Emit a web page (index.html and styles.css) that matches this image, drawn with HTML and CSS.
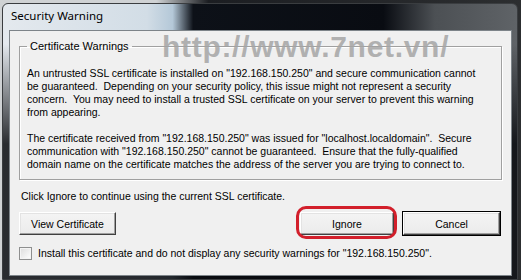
FILE: index.html
```html
<!DOCTYPE html>
<html>
<head>
  <meta charset="utf-8">
  <title>Security Warning</title>
  <link rel="stylesheet" href="styles.css">
</head>
<body>
  <div class="window">
    <div class="titlebar">Security Warning</div>

    <div class="client">
      <fieldset class="group">
        <legend>Certificate Warnings</legend>
        <p>An untrusted SSL certificate is installed on "192.168.150.250" and secure communication cannot<br>
        be guaranteed.&nbsp; Depending on your security policy, this issue might not represent a security<br>
        concern.&nbsp; You may need to install a trusted SSL certificate on your server to prevent this warning<br>
        from appearing.</p>
        <p>The certificate received from "192.168.150.250" was issued for "localhost.localdomain".&nbsp; Secure<br>
        communication with "192.168.150.250" cannot be guaranteed.&nbsp; Ensure that the fully-qualified<br>
        domain name on the certificate matches the address of the server you are trying to connect to.</p>
      </fieldset>

      <div class="hint">Click Ignore to continue using the current SSL certificate.</div>

      <div class="buttons">
        <button class="btn btn-view">View Certificate</button>
        <span class="spacer"></span>
        <button class="btn btn-ignore">Ignore</button>
        <button class="btn btn-cancel">Cancel</button>
      </div>

      <label class="check">
        <span class="box"></span>
        Install this certificate and do not display any security warnings for "192.168.150.250".
      </label>
    </div>

    <div class="watermark">http://www.7net.vn/</div>
  </div>
</body>
</html>
```

FILE: styles.css
```css
*{
    box-sizing: border-box;
}

body{
    margin: 0;
    width: 521px;
    height: 280px;
    overflow: hidden;
    background: linear-gradient(to right, #cfd2d4 0, #cfd2d4 30%, #1c1e22 40%, #2c2e30 100%);
    font-family: "Liberation Sans", Arial, sans-serif;
    font-size: 10.5px;
    color: #000;
}

.window{
    position: relative;
    margin: 3px 0 0 2px;
    width: 516px;
    height: 277px;
    padding: 0 5px 4px 6px;
    border-radius: 6px 6px 0 0;
    border: 1px solid #3a3d40;
    background:
        linear-gradient(to bottom, rgba(0,0,0,0) 0, rgba(0,0,0,0) 40px, rgba(8,10,14,0.85) 140px),
        linear-gradient(to right, #e4e9ee 0, #d2dde6 28%, #b4c8d8 33%, #0d1118 37%, #090c12 74%, #4c5054 84%, #5f6367 100%);
}

.titlebar{
    height: 26px;
    padding: 4px 0 0 2px;
    font-family: "Noto Sans", "Open Sans", sans-serif;
    font-size: 11.5px;
    line-height: 16px;
    color: #000;
}

.client{
    height: 246px;
    background: #f0f0f0;
    border: 1px solid #7d8489;
    padding: 9px 9px 0 9px;
}

/* group box */
.group{
    margin: 0;
    border: 1px solid #a0a0a0;
    box-shadow: 1px 1px 0 #fff, inset 1px 1px 0 #fff;
    padding: 14px 6px 8px 7px;
    min-width: 0;
}

.group legend{
    padding: 0 3px;
    line-height: 13px;
    font-size: 11px;
}

.group p{
    margin: 0 0 13px 0;
    line-height: 13px;
    white-space: nowrap;
}

.group p:last-child{
    margin-bottom: 0;
}

.hint{
    margin: 10px 0 0 2px;
    line-height: 13px;
}

.buttons{
    display: flex;
    gap: 9px;
    margin-top: 9px;
    padding-right: 2px;
}

.spacer{
    flex: 1;
}

.btn{
    height: 23px;
    padding: 0;
    font-family: inherit;
    font-size: 10.5px;
    color: #000;
    background: linear-gradient(#f4f4f4, #ebebeb);
    border: 1px solid;
    border-color: #fff #404040 #404040 #fff;
    box-shadow: inset -1px -1px 0 #a0a0a0, inset 1px 1px 0 #e3e3e3;
    border-radius: 0;
}

.btn-view{
    width: 97px;
}

.btn-ignore{
    position: relative;
    width: 94px;
}

/* red marker drawn over the Ignore button */
.btn-ignore::after{
    content: "";
    position: absolute;
    left: -5px;
    right: -4px;
    top: -7px;
    bottom: -5px;
    border: 3px solid #d21f2b;
    border-radius: 10px;
}

.btn-cancel{
    width: 97px;
    outline: 1px solid #000;
    outline-offset: 0;
}

.check{
    display: flex;
    align-items: center;
    gap: 6px;
    margin-top: 12px;
    line-height: 13px;
}

.check .box{
    width: 13px;
    height: 13px;
    background: linear-gradient(135deg, #dcdcdc, #fff);
    border: 1px solid #8e8f8f;
    box-shadow: inset 0 0 0 1px #f4f4f4;
}

.watermark{
    position: absolute;
    left: 159px;
    top: 26px;
    font-family: "Liberation Sans", Arial, sans-serif;
    font-weight: bold;
    font-size: 30px;
    letter-spacing: 0.7px;
    color: rgba(165,165,165,0.85);
    white-space: nowrap;
    pointer-events: none;
}
```
